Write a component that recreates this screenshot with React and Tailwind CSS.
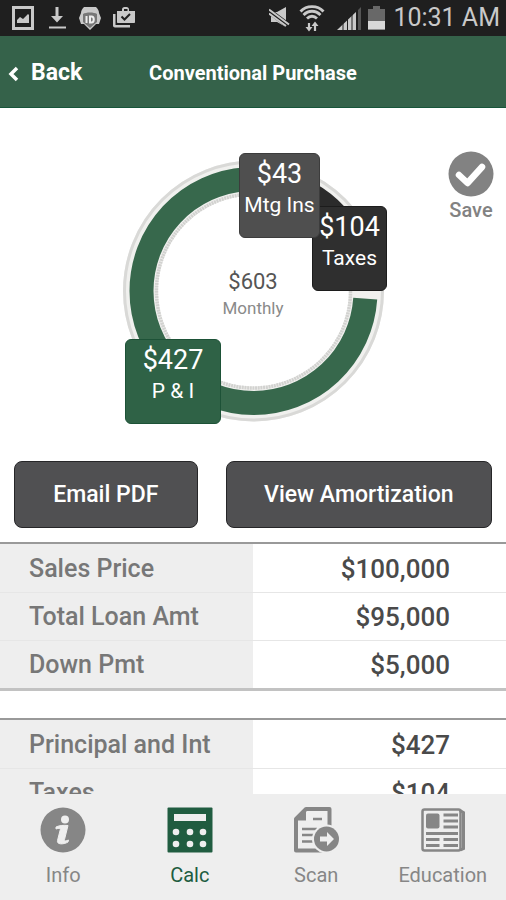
import React, { useState } from "react";

const loanRows = [
    { label: "Sales Price", value: "$100,000" },
    { label: "Total Loan Amt", value: "$95,000" },
    { label: "Down Pmt", value: "$5,000" }
];

const paymentRows = [
    { label: "Principal and Int", value: "$427" },
    { label: "Taxes", value: "$104" }
];

// start and length are in degrees, clockwise from 3 o'clock
const segments = [
    { name: "pi", start: 4, length: 262, color: "#37684c" },
    { name: "mtg", start: 267, length: 24, color: "#4f4f4f" },
    { name: "taxes", start: 291, length: 69, color: "#2b2b2b" }
];

const StatusBar = () => (
    <div className="flex h-9 shrink-0 items-center justify-between bg-[#1f1f1f] pl-3 pr-1.5 text-[#c9c9c9]">
        <div className="flex items-center gap-2.5">
            {/* Picture */}
            <svg width="22" height="24" viewBox="0 0 22 24" fill="none">
                <rect x="1.5" y="1.5" width="19" height="21" stroke="currentColor" strokeWidth="3" />
                <path d="M5 17v-3l3-3 3 2 5-5 1 1v8z" fill="currentColor" />
            </svg>
            {/* Download */}
            <svg width="24" height="24" viewBox="-2 0 24 24" fill="currentColor">
                <path d="M9.500 1h3v9H17l-6 6.500L5 10h4.500zM3 20.500h17v2H3z" />
            </svg>
            {/* ID badge */}
            <svg width="24" height="26" viewBox="0 0 24 26">
                <path d="M6 2h12c2 2 3 4 3 6l2 5-2 6h-3l-6 6-6-6H3l-2-6 2-5c0-2 1-4 3-6z" fill="currentColor" />
                <path d="M5 9c3-2 11-2 14 0v8l-7 6-7-6z" fill="#777777" />
                <path d="M8.500 11v7M12 11.500v6h1.500c3 0 3-6 0-6z" fill="none" stroke="#eeeeee" strokeWidth="2" />
            </svg>
            {/* Briefcase */}
            <svg width="24" height="24" viewBox="0 0 24 24">
                <path d="M1 8h2.500v11H18v2.500H3c-1.200 0-2-.8-2-2z" fill="currentColor" />
                <path d="M5 5h5V3.500C10 2 11 1 12.500 1h2C16 1 17 2 17 3.500V5h6v11c0 .6-.4 1-1 1H6c-.6 0-1-.4-1-1zm7 0h3.500V3H12z" fill="currentColor" fillRule="evenodd" />
                <path d="M9.500 10.500l3 3 5.500-5.500" fill="none" stroke="#1f1f1f" strokeWidth="2" />
            </svg>
        </div>
        <div className="flex items-center">
            {/* Muted */}
            <svg width="22" height="24" viewBox="0 0 22 24">
                <path d="M2 6h6l9-5v20l-9-5H2z" fill="currentColor" />
                <path d="M0 5l20 15" stroke="#1f1f1f" strokeWidth="5.500" />
                <path d="M0 3.500l20 15M0 7.500l17 12.500" stroke="currentColor" strokeWidth="2" />
            </svg>
            {/* Wifi */}
            <svg className="ml-2" width="26" height="28" viewBox="0 0 26 28" fill="none" stroke="currentColor">
                <path d="M1.500 7.500c6-6.500 17-6.500 23 0M4.500 11c5-5 12-5 17 0M8 14.500c3-3 7-3 10 0" strokeWidth="2.800" />
                <path d="M10 19v6M16 27v-6" strokeWidth="2.200" />
                <path d="M6.500 23h7L10 27.500zM12.500 22h7L16 17.500z" fill="currentColor" stroke="none" />
            </svg>
            {/* Signal */}
            <svg className="ml-3" width="26" height="24" viewBox="0 0 26 24">
                <path d="M0 24L20 5v19z" fill="currentColor" />
                <path d="M6 17v7M10.500 13v11M15 8v16M19.500 4v20" stroke="#1f1f1f" strokeWidth="1" />
                <path d="M21 4l3-3v23h-3z" fill="#555555" />
            </svg>
            {/* Battery */}
            <svg className="ml-1" width="20" height="26" viewBox="0 0 20 26">
                <path d="M1 4h5V1h7v3h5v20.500H1z" fill="#686868" />
                <path d="M1 16h17v8.500H1z" fill="#d8d8d8" />
            </svg>
            <span className="ml-1.5 text-[25px] leading-9">10:31 AM</span>
        </div>
    </div>
);

const PaymentTag = ({ amount, label, className }) => (
    <div className={`absolute flex h-[85px] flex-col items-center whitespace-nowrap rounded-md border pt-1 text-white ${className}`}>
        <span className="text-[27px] leading-8">{amount}</span>
        <span className="text-[21px] leading-[30px]">{label}</span>
    </div>
);

const PaymentChart = () => (
    <div className="relative mt-2 h-[264px] w-[264px]">
        <svg className="absolute inset-0" width="264" height="264" viewBox="0 0 264 264" fill="none">
            <circle cx="132.5" cy="132" r="113" stroke="#f0f0ee" strokeWidth="35" />
            <circle cx="132.5" cy="132" r="129" stroke="#d9d9d7" strokeWidth="3" />
            <circle cx="132.5" cy="132" r="97" stroke="#d2d2d0" strokeWidth="3.500" strokeDasharray="2 0.700" />
            {segments.map((s) => (
                <circle
                    key={s.name}
                    cx="132.5"
                    cy="132"
                    r="112"
                    pathLength="360"
                    stroke={s.color}
                    strokeWidth="24"
                    strokeDasharray={`${s.length} ${360 - s.length}`}
                    strokeDashoffset={-s.start}
                />
            ))}
        </svg>
        <div className="absolute inset-0 flex flex-col items-center justify-center pt-1.5">
            <span className="text-[22px] leading-7 text-[#555555]">$603</span>
            <span className="text-[17px] leading-6 text-[#8a8a8a]">Monthly</span>
        </div>
        <PaymentTag amount="$104" label="Taxes" className="left-[191px] top-[47px] w-[75px] border-[#1c1c1c] bg-[#2f2f2f]" />
        <PaymentTag amount="$43" label="Mtg Ins" className="left-[118px] top-[-6px] w-[81px] border-[#3c3c3c] bg-[#4f4f4f]" />
        <PaymentTag amount="$427" label="P & I" className="left-[4px] top-[180px] w-[96px] border-[#1d5237] bg-[#2f6246]" />
    </div>
);

const FigureTable = ({ rows }) => (
    <div className="border-b-3 border-t-2 border-b-[#c2c2c2] border-t-[#999999]">
        <table className="w-full table-fixed">
            <tbody>
                {rows.map((row) => (
                    <tr key={row.label} className="h-12 border-b border-[#e6e6e6] last:border-b-0">
                        <th scope="row" className="bg-[#eeeeee] pl-[29px] pt-0.5 text-left text-[25px] font-medium leading-8 text-[#777777]">
                            {row.label}
                        </th>
                        <td className="pr-14 pt-0.5 text-right text-[26px] font-medium leading-8 text-[#4a4a4a]">{row.value}</td>
                    </tr>
                ))}
            </tbody>
        </table>
    </div>
);

const InfoIcon = () => (
    <svg width="46" height="46" viewBox="0 0 46 46">
        <circle cx="23" cy="23" r="22.500" fill="currentColor" />
        <circle cx="25" cy="12.500" r="4" fill="#eeeeee" />
        <path d="M16 20c3-1.500 7-2 12-1.500l-3.500 14c-.4 1.500.5 2 4 .5l-.5 2c-4 2.500-11.500 3-10.500-1.500l2.800-11c.3-1.200-1.300-1.500-4.300-.5z" fill="#eeeeee" stroke="#eeeeee" strokeWidth="1" />
    </svg>
);

const CalcIcon = () => (
    <svg width="46" height="46" viewBox="0 0 46 46">
        <rect x="0.500" y="0.500" width="45" height="45" rx="1" fill="currentColor" />
        <rect x="7" y="7" width="32" height="7" fill="#eeeeee" />
        <g fill="#eeeeee">
            <circle cx="9" cy="25" r="3.300" />
            <circle cx="23" cy="25" r="3.300" />
            <circle cx="36" cy="25" r="3.300" />
            <circle cx="9" cy="37" r="3.300" />
            <circle cx="23" cy="37" r="3.300" />
            <circle cx="36" cy="37" r="3.300" />
        </g>
    </svg>
);

const ScanIcon = () => (
    <svg width="46" height="46" viewBox="0 0 46 46" fill="none">
        <path d="M13 2h23.500v41.500H3V12z" stroke="currentColor" strokeWidth="4" strokeLinejoin="round" />
        <path d="M13 1v12.500H2z" fill="currentColor" />
        <path d="M20 12h9M9 22h15M9 28h12M9 34.500h12" stroke="currentColor" strokeWidth="2.500" />
        <circle cx="33.500" cy="32" r="14.500" fill="#eeeeee" />
        <circle cx="33.500" cy="32" r="12.500" fill="currentColor" />
        <path d="M27 29.500h7v-4.500l7 7-7 7v-4.500h-7z" fill="#eeeeee" />
    </svg>
);

const EducationIcon = () => (
    <svg width="46" height="46" viewBox="0 0 46 46" fill="none" stroke="currentColor">
        <rect x="2.500" y="2.500" width="38" height="41" rx="2" strokeWidth="2.500" />
        <path d="M40 3.500l3.500 2v36l-3 1.500" strokeWidth="3" />
        <rect x="6" y="6.500" width="13.500" height="15" rx="2" fill="currentColor" stroke="none" />
        <path d="M23.500 8H38M23.500 14H38M23.500 20H38M6 26.500h32M6 32.500h13.500M23.500 32.500H38M6 38.500h13.500M23.500 38.500H38" strokeWidth="2.800" />
    </svg>
);

const tabs = [
    { name: "Info", icon: InfoIcon },
    { name: "Calc", icon: CalcIcon },
    { name: "Scan", icon: ScanIcon },
    { name: "Education", icon: EducationIcon }
];

export default function App() {
    const [activeTab, setActiveTab] = useState("Calc");

    return (
        <div className="flex h-screen flex-col overflow-hidden bg-white font-['Roboto',sans-serif]">
            <StatusBar />

            {/* Header */}
            <header className="grid h-[72px] shrink-0 grid-cols-[1fr_auto_1fr] items-center border-b border-[#17553a] bg-[#35624a] pt-0.5 text-white">
                <button type="button" className="flex items-center gap-3 justify-self-start pl-[7px] pt-0.5 text-[23px] font-bold">
                    <svg width="12" height="16" viewBox="0 0 12 16" fill="none">
                        <path d="M10 2L4 8l6 6" stroke="currentColor" strokeWidth="3.500" />
                    </svg>
                    Back
                </button>
                <h1 className="text-xl font-bold">Conventional Purchase</h1>
            </header>

            <main className="min-h-0 flex-1 overflow-hidden">
                {/* Payment breakdown */}
                <section className="grid grid-cols-[1fr_auto_1fr] items-start pt-[43px]">
                    <div />
                    <PaymentChart />
                    <button type="button" className="mr-3 flex flex-col items-center justify-self-end text-[#828282]">
                        <svg width="46" height="46" viewBox="0 0 46 46" fill="none">
                            <circle cx="23" cy="23" r="22.500" fill="currentColor" />
                            <path d="M11 24l8.500 8L34 16" stroke="white" strokeWidth="6.500" strokeLinecap="round" strokeLinejoin="round" />
                        </svg>
                        <span className="text-xl font-medium leading-[26px]">Save</span>
                    </button>
                </section>

                <div className="mt-[38px] grid grid-cols-[184fr_267fr] gap-7 px-[14px]">
                    <button type="button" className="h-[67px] rounded-lg border border-[#262628] bg-[#505052] pt-0.5 text-[23px] font-medium text-white">
                        Email PDF
                    </button>
                    <button type="button" className="h-[67px] rounded-lg border border-[#262628] bg-[#505052] pt-0.5 text-[23px] font-medium text-white">
                        View Amortization
                    </button>
                </div>

                {/* Figures */}
                <div className="mt-[14px] flex flex-col gap-[27px]">
                    <FigureTable rows={loanRows} />
                    <FigureTable rows={paymentRows} />
                </div>
            </main>

            {/* Tab bar */}
            <nav className="grid h-[106px] shrink-0 grid-cols-4 bg-[#eeeeee]">
                {tabs.map(({ name, icon: Icon }) => (
                    <button
                        key={name}
                        type="button"
                        onClick={() => setActiveTab(name)}
                        className={`flex flex-col items-center pt-[13px] ${activeTab === name ? "text-[#205c40]" : "text-[#868686]"}`}
                    >
                        <Icon />
                        <span className="mt-2 text-xl leading-7">{name}</span>
                    </button>
                ))}
            </nav>
        </div>
    );
}
